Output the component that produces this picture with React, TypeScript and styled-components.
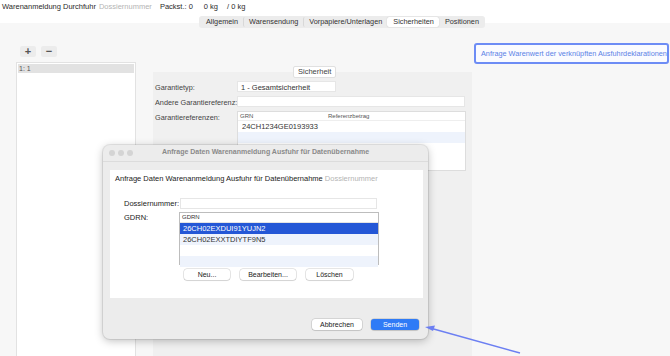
import React, { FC } from 'react';
import styled, { createGlobalStyle } from 'styled-components';

const GlobalStyle = createGlobalStyle`
	html, body {
		margin: 0;
		padding: 0;
		background: #f7f7f7;
	}
	body {
		font-family: "Liberation Sans", Arial, sans-serif;
		font-size: 7px;
		color: #2a2a2a;
	}
`;

const Root = styled.div`
	position: relative;
	width: 670px;
	height: 356px;
	overflow: hidden;
	background: #f7f7f7;
`;

const TopBar = styled.div`
	height: 23px;
	background: #ffffff;
	position: relative;
`;

const TitleLine = styled.div`
	padding: 2px 0 0 2px;
	display: flex;
	gap: 3px;
	font-size: 7.5px;
	white-space: nowrap;
`;

const Muted = styled.span`
	color: #b4b4b4;
`;

const Stat = styled.span<{ $gap: number }>`
	margin-left: ${(p) => p.$gap}px;
`;

const Tabs = styled.div`
	position: absolute;
	left: 199px;
	top: 16px;
	height: 12px;
	display: flex;
	align-items: center;
	background: #ececec;
	border-radius: 3px;
	padding: 0 1px;
`;

const Tab = styled.div<{ $active?: boolean; $sep?: boolean }>`
	height: 10px;
	line-height: 10px;
	padding: 0 5px;
	font-size: 7.3px;
	color: #333;
	border-radius: 2px;
	background: ${(p) => (p.$active ? '#ffffff' : 'transparent')};
	box-shadow: ${(p) => (p.$active ? '0 0 1px rgba(0,0,0,0.25)' : 'none')};
	border-left: 1px solid ${(p) => (p.$sep ? '#d8d8d8' : 'transparent')};
`;

const Body = styled.div`
	display: flex;
	height: 333px;
`;

const LeftCol = styled.div`
	width: 120px;
	margin-left: 16px;
	display: flex;
	flex-direction: column;
`;

const Tools = styled.div`
	display: flex;
	gap: 5px;
	padding: 23px 0 0 4px;
	height: 11px;
`;

const ToolButton = styled.div`
	width: 16px;
	height: 11px;
	background: #ececec;
	border-radius: 2px;
	display: flex;
	align-items: center;
	justify-content: center;
	font-size: 11px;
	font-weight: bold;
	color: #555;
	line-height: 1;
`;

const List = styled.div`
	margin-top: 5px;
	flex: 1;
	background: #ffffff;
	border: 1px solid #e2e2e2;
	border-bottom: none;
	padding: 1px;
`;

const ListRow = styled.div`
	height: 9px;
	line-height: 9px;
	background: #e2e2e2;
	padding-left: 1px;
	color: #555;
	font-size: 7px;
`;

const Main = styled.div`
	width: 319px;
	margin-left: 17px;
	margin-top: 49px;
	background: #f0f0f0;
	position: relative;
	padding: 9px 4px 0 2px;
	box-sizing: border-box;
`;

const GroupTitle = styled.div`
	position: absolute;
	top: -6px;
	left: 140px;
	height: 10px;
	line-height: 10px;
	padding: 0 4px;
	background: #ffffff;
	border: 1px solid #e0e0e0;
	border-radius: 2px;
	font-size: 7.5px;
	color: #444;
`;

const FieldRow = styled.div`
	display: flex;
	align-items: flex-start;
	margin-bottom: 4px;
`;

const Label = styled.div`
	width: 82px;
	padding-top: 2px;
	font-size: 7.3px;
	color: #444;
	white-space: nowrap;
`;

const Input = styled.div<{ $w: number }>`
	width: ${(p) => p.$w}px;
	height: 11px;
	line-height: 11px;
	background: #ffffff;
	border: 1px solid #e6e6e6;
	box-sizing: border-box;
	padding-left: 3px;
	font-size: 7.5px;
	color: #333;
`;

const Table = styled.div`
	width: 229px;
	height: 60px;
	background: #ffffff;
	border: 1px solid #dddddd;
	box-sizing: border-box;
`;

const TableHead = styled.div`
	display: grid;
	grid-template-columns: 88px 1fr;
	height: 8px;
	line-height: 8px;
	font-size: 6px;
	color: #555;
	padding-left: 2px;
	border-bottom: 1px solid #eee;
`;

const TableRow = styled.div<{ $alt?: boolean }>`
	height: 11px;
	line-height: 11px;
	padding-left: 4px;
	font-size: 7.5px;
	color: #333;
	background: ${(p) => (p.$alt ? '#eef3fc' : '#ffffff')};
`;

const RightCol = styled.div`
	margin-left: 2px;
	padding-top: 20px;
`;

const LinkButton = styled.div`
	width: 195px;
	height: 21px;
	box-sizing: border-box;
	border: 2px solid #6d8cf5;
	border-radius: 3px;
	background: #fafbff;
	color: #5a82e6;
	font-size: 7.3px;
	line-height: 17px;
	padding-left: 5px;
	white-space: nowrap;
	overflow: hidden;
`;

const Dialog = styled.div`
	position: absolute;
	left: 103px;
	top: 145px;
	width: 325px;
	height: 194px;
	background: #ececec;
	border-radius: 7px;
	box-shadow: 0 2px 8px rgba(0, 0, 0, 0.25), 0 0 0 1px rgba(0, 0, 0, 0.08);
	display: flex;
	flex-direction: column;
`;

const DialogBar = styled.div`
	height: 16px;
	display: flex;
	align-items: center;
	padding-left: 6px;
	position: relative;
	border-bottom: 1px solid #dcdcdc;
`;

const Light = styled.div`
	width: 6px;
	height: 6px;
	border-radius: 50%;
	background: #d4d4d4;
	margin-right: 3px;
`;

const DialogTitle = styled.div`
	position: absolute;
	left: 0;
	right: 0;
	top: 3px;
	text-align: center;
	font-size: 7px;
	font-weight: bold;
	color: #8a8a8a;
`;

const DialogInner = styled.div`
	margin: 8px 5px 0 7px;
	height: 128px;
	background: #ffffff;
	padding: 4px 5px 0 5px;
	box-sizing: border-box;
`;

const InnerHeading = styled.div`
	font-size: 7.5px;
	color: #222;
	white-space: nowrap;
	margin-bottom: 15px;
`;

const DialogRow = styled.div`
	display: flex;
	align-items: flex-start;
	margin-left: 9px;
	margin-bottom: 3px;
`;

const DialogLabel = styled.div`
	width: 56px;
	padding-top: 1px;
	font-size: 7.5px;
	color: #222;
`;

const GdrnList = styled.div`
	width: 200px;
	height: 53px;
	border: 1px solid #bdbdbd;
	box-sizing: border-box;
	background: #ffffff;
	margin-left: -1px;
`;

const GdrnHead = styled.div`
	height: 9px;
	line-height: 9px;
	font-size: 6px;
	padding-left: 2px;
	color: #333;
	border-bottom: 1px solid #e4e4e4;
`;

const GdrnRow = styled.div<{ $variant: 'selected' | 'alt' | 'plain' }>`
	height: 11px;
	line-height: 11px;
	padding-left: 3px;
	font-size: 7.5px;
	color: ${(p) => (p.$variant === 'selected' ? '#ffffff' : '#333')};
	background: ${(p) =>
		p.$variant === 'selected' ? '#2457d6' : p.$variant === 'alt' ? '#eef3fc' : '#ffffff'};
`;

const ButtonRow = styled.div`
	display: flex;
	gap: 10px;
	margin: 4px 0 0 69px;
`;

const PushButton = styled.div<{ $w: number; $primary?: boolean }>`
	width: ${(p) => p.$w}px;
	height: 11px;
	line-height: 11px;
	text-align: center;
	border-radius: 3px;
	font-size: 7px;
	background: ${(p) => (p.$primary ? '#2f7bf6' : '#ffffff')};
	color: ${(p) => (p.$primary ? '#ffffff' : '#222')};
	box-shadow: 0 0 0 0.5px rgba(0, 0, 0, 0.2), 0 1px 1px rgba(0, 0, 0, 0.08);
`;

const DialogFooter = styled.div`
	display: flex;
	justify-content: flex-end;
	gap: 9px;
	padding: 21px 9px 0 0;
`;

const Arrow = styled.svg`
	position: absolute;
	left: 420px;
	top: 320px;
`;

const App: FC = () => {
	return (
		<Root>
			<GlobalStyle />
			<TopBar>
				<TitleLine>
					<span>Warenanmeldung Durchfuhr</span>
					<Muted>Dossiernummer</Muted>
					<Stat $gap={5}>Packst.: 0</Stat>
					<Stat $gap={8}>0 kg</Stat>
					<Stat $gap={6}>/ 0 kg</Stat>
				</TitleLine>
				<Tabs>
					<Tab>Allgemein</Tab>
					<Tab $sep>Warensendung</Tab>
					<Tab $sep>Vorpapiere/Unterlagen</Tab>
					<Tab $active>Sicherheiten</Tab>
					<Tab>Positionen</Tab>
				</Tabs>
			</TopBar>
			<Body>
				<LeftCol>
					<Tools>
						<ToolButton>+</ToolButton>
						<ToolButton>−</ToolButton>
					</Tools>
					<List>
						<ListRow>1: 1</ListRow>
					</List>
				</LeftCol>
				<Main>
					<GroupTitle>Sicherheit</GroupTitle>
					<FieldRow>
						<Label>Garantietyp:</Label>
						<Input $w={99}>1 - Gesamtsicherheit</Input>
					</FieldRow>
					<FieldRow>
						<Label>Andere Garantiereferenz:</Label>
						<Input $w={228} />
					</FieldRow>
					<FieldRow>
						<Label>Garantiereferenzen:</Label>
						<Table>
							<TableHead>
								<span>GRN</span>
								<span>Referenzbetrag</span>
							</TableHead>
							<TableRow>24CH1234GE0193933</TableRow>
							<TableRow $alt />
							<TableRow />
						</Table>
					</FieldRow>
				</Main>
				<RightCol>
					<LinkButton>Anfrage Warenwert der verknüpften Ausfuhrdeklarationen</LinkButton>
				</RightCol>
			</Body>

			<Dialog>
				<DialogBar>
					<Light />
					<Light />
					<Light />
					<DialogTitle>Anfrage Daten Warenanmeldung Ausfuhr für Datenübernahme</DialogTitle>
				</DialogBar>
				<DialogInner>
					<InnerHeading>
						Anfrage Daten Warenanmeldung Ausfuhr für Datenübernahme <Muted>Dossiernummer</Muted>
					</InnerHeading>
					<DialogRow>
						<DialogLabel>Dossiernummer:</DialogLabel>
						<Input $w={197} />
					</DialogRow>
					<DialogRow>
						<DialogLabel>GDRN:</DialogLabel>
						<GdrnList>
							<GdrnHead>GDRN</GdrnHead>
							<GdrnRow $variant="selected">26CH02EXDUI91YUJN2</GdrnRow>
							<GdrnRow $variant="alt">26CH02EXXTDIYTF9N5</GdrnRow>
							<GdrnRow $variant="plain" />
							<GdrnRow $variant="alt" />
						</GdrnList>
					</DialogRow>
					<ButtonRow>
						<PushButton $w={46}>Neu...</PushButton>
						<PushButton $w={56}>Bearbeiten...</PushButton>
						<PushButton $w={47}>Löschen</PushButton>
					</ButtonRow>
				</DialogInner>
				<DialogFooter>
					<PushButton $w={50}>Abbrechen</PushButton>
					<PushButton $w={48} $primary>
						Senden
					</PushButton>
				</DialogFooter>
			</Dialog>

			<Arrow width="110" height="40" viewBox="0 0 110 40">
				<line x1="100" y1="33" x2="10" y2="8" stroke="#6c7ff2" strokeWidth="1.5" />
				<polygon points="5,7 15,5.5 13,11" fill="#6c7ff2" />
			</Arrow>
		</Root>
	);
};

export default App;
